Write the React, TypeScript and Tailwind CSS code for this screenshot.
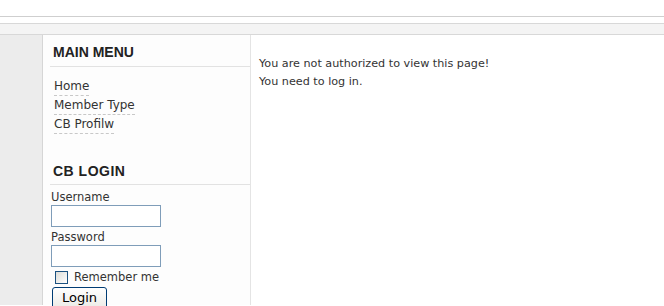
export default function App() {
  return (
    <div className="w-[664px] h-[306px] overflow-hidden bg-white font-['DejaVu_Sans',Tahoma,sans-serif] text-[11px] text-[#333]">
      {/* top bars */}
      <div className="h-[16px]" />
      <div className="h-px bg-[#cfcfcf]" />
      <div className="h-[6px]" />
      <div className="h-[12px] bg-[#f4f4f4] border-y border-[#d8d8d8]" />
      <div className="flex h-[270px]">
        <div className="w-[43px] bg-[#ececec] border-r border-[#d6d6d6]" />
        <aside className="w-[208px] bg-[#fdfdfd] border-r border-[#e4e4e4] pt-[9px]">
          <h3 className="ml-[10px] text-[14px] font-bold text-[#222] leading-[16px] font-['Liberation_Sans',Arial,sans-serif]">MAIN MENU</h3>
          <div className="ml-[7px] mt-[6px] border-t border-[#e2e2e2]" />
          <ul className="ml-[11px] mt-[10px] text-[12px] text-[#333]">
            <li className="w-max border-b border-dashed border-[#c8c8c8] leading-[18px]">Home</li>
            <li className="w-max border-b border-dashed border-[#c8c8c8] leading-[18px]">Member Type</li>
            <li className="w-max border-b border-dashed border-[#c8c8c8] leading-[18px]">CB Profilw</li>
          </ul>
          <h3 className="ml-[10px] mt-[29px] text-[14px] font-bold text-[#222] leading-[16px] tracking-[0.5px] font-['Liberation_Sans',Arial,sans-serif]">CB LOGIN</h3>
          <div className="ml-[7px] mt-[5px] border-t border-[#e2e2e2]" />
          <form className="ml-[8px] mt-[5px] text-[11.5px]">
            <label className="block leading-[15px]">Username</label>
            <input className="block w-[110px] h-[22px] border border-[#7f9db9] bg-white" />
            <label className="block leading-[15px] mt-[3px]">Password</label>
            <input type="password" className="block w-[110px] h-[22px] border border-[#7f9db9] bg-white" />
            <div className="flex items-center mt-[3px] ml-[4px] gap-[6px]">
              <span className="w-[13px] h-[13px] border border-[#1c5180] bg-gradient-to-br from-[#dcdcd7] to-white" />
              <span className="leading-[15px]">Remember me</span>
            </div>
            <button type="button" className="mt-[2px] ml-[1px] w-[55px] h-[22px] border border-[#003c74] rounded-[3px] bg-gradient-to-b from-white to-[#ecebe6] text-[13px] text-black leading-[18px]">Login</button>
          </form>
        </aside>
        <main className="flex-1 pt-[20px] pl-[8px] text-[11.2px] leading-[18px] text-[#333]">
          <p>You are not authorized to view this page!</p>
          <p>You need to log in.</p>
        </main>
      </div>
    </div>
  )
}
